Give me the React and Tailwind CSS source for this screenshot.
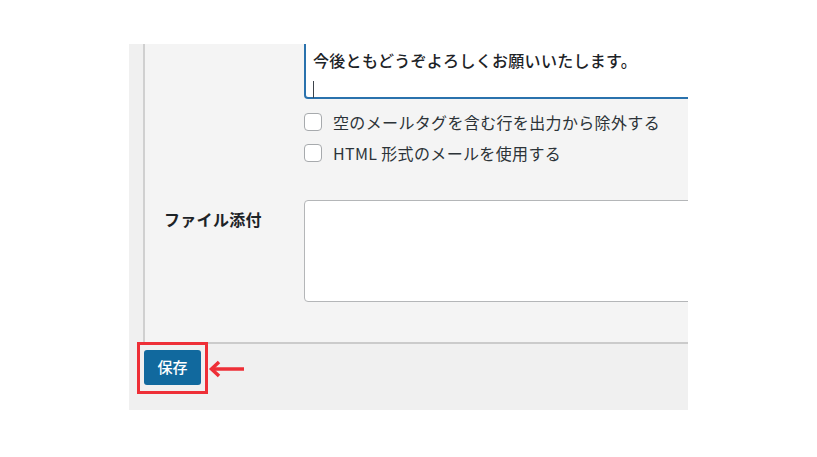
import React from "react";

function Checkbox({ label }) {
  return (
    <label className="flex items-center h-[31px]">
      <span className="w-[18px] h-[18px] rounded-[4px] border border-[#a7aaad] bg-white shrink-0" />
      <span className="ml-[11px] text-[16px] tracking-[0.35px] text-[#2c3338]">{label}</span>
    </label>
  );
}

export default function App() {
  return (
    <div
      className="w-[817px] h-[457px] bg-white pt-[44px] pl-[129px] relative"
      style={{ fontFamily: '"Noto Sans CJK JP", "Noto Sans", sans-serif' }}
    >
      <div className="w-[559px] h-[366px] overflow-hidden bg-[#f0f0f0] flex flex-col">
        <div className="flex h-[300px] shrink-0">
          <div className="w-[14px] bg-[#f0f0f0] shrink-0" />
          <div className="w-[2px] bg-[#d0d0d0] shrink-0" />
          <div className="flex-1 bg-[#f4f4f4] border-b-2 border-[#cbcbcb] relative">
            {/* textarea (top cropped) */}
            <div className="absolute left-[159px] top-0 w-[420px] h-[55px] bg-white border-x-2 border-b-2 border-[#2a72ad] rounded-bl-[4px]">
              <div className="pl-[7px] pt-[6px] text-[16px] leading-[20px] font-medium tracking-[0.3px] text-[#1d2327] whitespace-nowrap">
                今後ともどうぞよろしくお願いいたします。
              </div>
              <div className="ml-[7px] mt-[11px] w-px h-[17px] bg-[#3c434a]" />
            </div>
            <div className="absolute left-[159px] top-[62px]">
              <Checkbox label="空のメールタグを含む行を出力から除外する" />
              <Checkbox label="HTML 形式のメールを使用する" />
            </div>
            <div className="absolute left-[19px] top-[163px] text-[16px] font-bold text-[#1d2327] tracking-[0.3px]">
              ファイル添付
            </div>
            <div className="absolute left-[159px] top-[156px] w-[420px] h-[102px] bg-white border border-[#b4b6b8] rounded-[4px]" />
          </div>
        </div>
        <div className="flex-1 bg-[#f0f0f0] pl-[15px] pt-[6px]">
          <button className="w-[57px] h-[35px] rounded-[3px] bg-[#11699e] text-white text-[15px] font-medium flex items-center justify-center">
            保存
          </button>
        </div>
      </div>
      {/* annotation */}
      <div className="absolute left-[137px] top-[342px] w-[71px] h-[52px] border-[3px] border-[#ee2f37]" />
      <svg className="absolute left-[207px] top-[359px]" width="40" height="20" viewBox="0 0 40 20">
        <path d="M37 10 H7" stroke="#ee2f37" strokeWidth="3.5" fill="none" />
        <path d="M12 3 L4.5 10 L12 17" stroke="#ee2f37" strokeWidth="3.5" fill="none" strokeLinejoin="miter" />
      </svg>
    </div>
  );
}
